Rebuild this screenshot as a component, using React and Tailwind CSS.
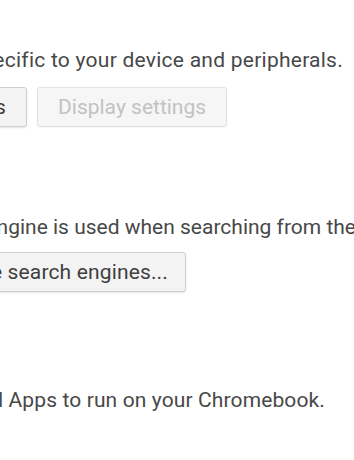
import React from "react";

function Btn({ children, disabled, extra = "" }) {
  return (
    <button
      className={
        (disabled
          ? "shrink-0 h-[40px] px-[20px] whitespace-nowrap rounded-[3px] border border-[#e2e2e2] bg-[#f6f6f6] text-[#c2c2c2] shadow-[0_1px_1px_rgba(0,0,0,0.04)] "
          : "shrink-0 h-[40px] px-[20px] whitespace-nowrap rounded-[3px] border border-[#cfcfcf] bg-[#f3f3f3] text-[#3e3e3e] tracking-[0.15px] shadow-[0_1px_2px_rgba(0,0,0,0.10)] ") +
        extra
      }
    >
      {children}
    </button>
  );
}

export default function App() {
  return (
    <div className="w-[354px] h-[460px] overflow-hidden bg-white font-['Roboto',sans-serif] text-[21px] leading-[24px] text-[#484848]">
      <div className="pt-[48px]">
        <div className="flex w-[343px] justify-end whitespace-nowrap tracking-[0.25px]">
          <span className="shrink-0">Change settings specific to your device and peripherals.</span>
        </div>
        <div className="mt-[15px] flex items-center">
          <div className="flex w-[27px] shrink-0 justify-end">
            <Btn>Keyboard settings</Btn>
          </div>
          <div className="ml-[10px]">
            <Btn disabled>Display settings</Btn>
          </div>
        </div>

        <div className="mt-[88px] flex whitespace-nowrap">
          <div className="flex w-[356px] shrink-0 justify-end">
            <span className="shrink-0">Set which search engine is used when searching from the</span>
          </div>
          <span className="shrink-0">&nbsp;omnibox.</span>
        </div>
        <div className="mt-[13px] flex">
          <div className="flex w-[186px] shrink-0 justify-end">
            <Btn extra="!pr-[17px]">Manage search engines...</Btn>
          </div>
        </div>

        <div className="mt-[96px] flex w-[325px] justify-end whitespace-nowrap tracking-[0.12px]">
          <span className="shrink-0">Enable Android Apps to run on your Chromebook.</span>
        </div>
      </div>
    </div>
  );
}
